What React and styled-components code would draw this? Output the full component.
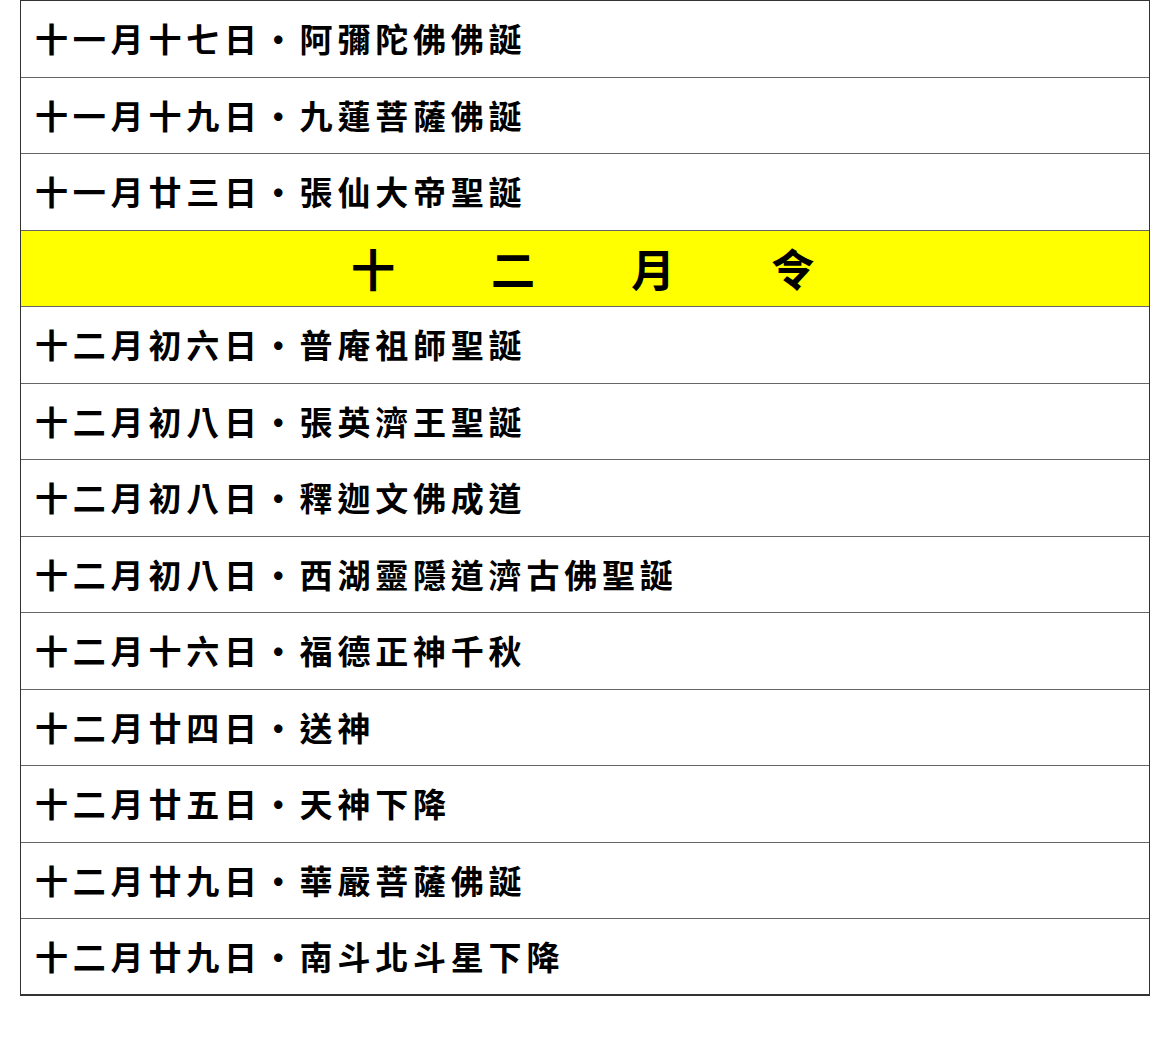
import React from "react";
import styled, { createGlobalStyle } from "styled-components";

const GlobalStyle = createGlobalStyle`
  html, body {
    margin: 0;
    padding: 0;
    background: #ffffff;
  }
  body {
    font-family: "Noto Sans CJK TC", "Noto Sans CJK SC", sans-serif;
    color: #000;
  }
`;

const Table = styled.div`
  display: flex;
  flex-direction: column;
  width: 1130px;
  margin-left: 20px;
  border: 1px solid #333;
  border-bottom: none;
  box-sizing: border-box;
`;

const Row = styled.div`
  display: flex;
  align-items: center;
  justify-content: ${(p) => (p.$header ? "center" : "flex-start")};
  gap: ${(p) => (p.$header ? "96px" : "0")};
  height: 76.5px;
  box-sizing: border-box;
  padding-left: ${(p) => (p.$header ? "0" : "14px")};
  padding-right: ${(p) => (p.$header ? "4px" : "0")};
  background: ${(p) => (p.$header ? "#ffff00" : "#ffffff")};
  border-bottom: ${(p) => (p.$last ? "2px solid #333" : "1.5px solid #666")};
`;

const Entry = styled.span`
  font-size: 33px;
  font-weight: 700;
  letter-spacing: 4.8px;
  line-height: 1;
  white-space: nowrap;
`;

const HeadChar = styled.span`
  font-size: 44px;
  font-weight: 700;
  line-height: 1;
`;

const november = [
  "十一月十七日・阿彌陀佛佛誕",
  "十一月十九日・九蓮菩薩佛誕",
  "十一月廿三日・張仙大帝聖誕",
];

const december = [
  "十二月初六日・普庵祖師聖誕",
  "十二月初八日・張英濟王聖誕",
  "十二月初八日・釋迦文佛成道",
  "十二月初八日・西湖靈隱道濟古佛聖誕",
  "十二月十六日・福德正神千秋",
  "十二月廿四日・送神",
  "十二月廿五日・天神下降",
  "十二月廿九日・華嚴菩薩佛誕",
  "十二月廿九日・南斗北斗星下降",
];

export default function App() {
  return (
    <>
      <GlobalStyle />
      <Table>
        {november.map((t) => (
          <Row key={t}>
            <Entry>{t}</Entry>
          </Row>
        ))}
        <Row $header>
          {["十", "二", "月", "令"].map((c) => (
            <HeadChar key={c}>{c}</HeadChar>
          ))}
        </Row>
        {december.map((t, i) => (
          <Row key={t + i} $last={i === december.length - 1}>
            <Entry>{t}</Entry>
          </Row>
        ))}
      </Table>
    </>
  );
}
